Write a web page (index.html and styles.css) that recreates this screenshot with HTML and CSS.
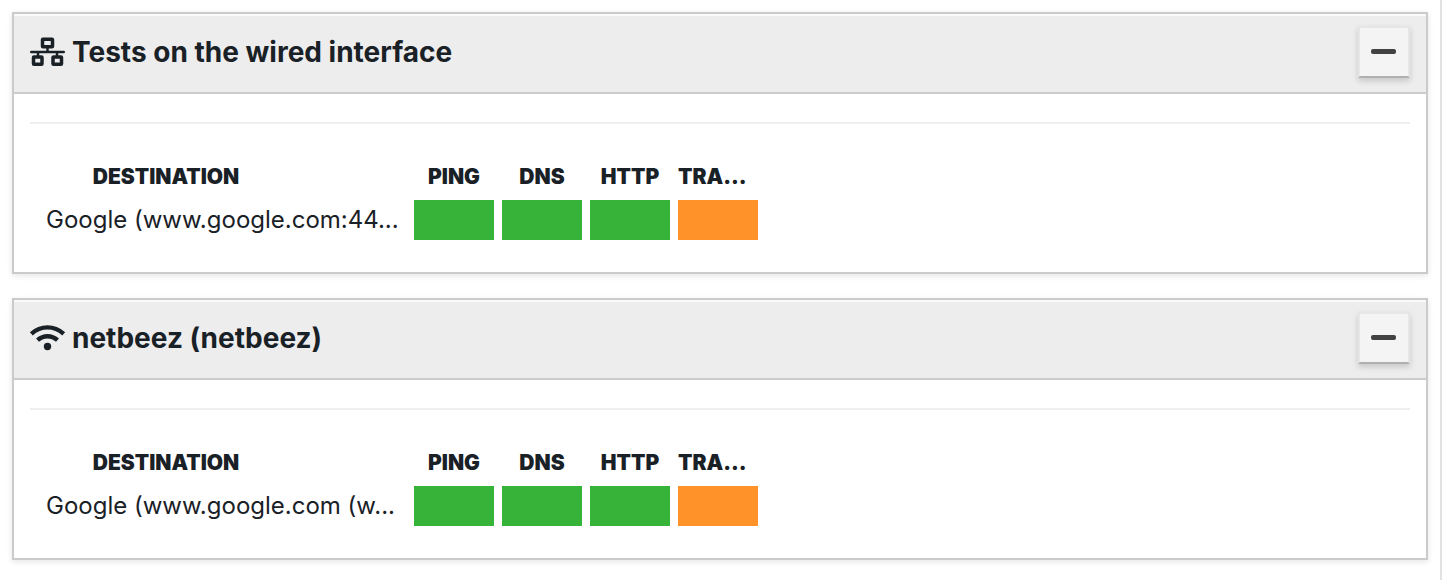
FILE: index.html
```html
<!DOCTYPE html>
<html lang="en">
<head>
<meta charset="utf-8">
<title>Agent tests</title>
<link rel="stylesheet" href="styles.css">
</head>
<body>
<main class="page">
  <section class="panel">
    <header class="panel-header">
      <h2 class="panel-title">
        <svg class="icon" viewBox="0 0 35 28" aria-hidden="true"><g fill="none" stroke="currentColor" stroke-width="3.500"><rect x="12.500" y="1.200" width="10" height="7.500" rx=".5"/><rect x="3.500" y="19" width="8.500" height="7.300" rx=".5"/><rect x="23" y="19" width="8.500" height="7.300" rx=".5"/></g><path d="M1.250 14h32.500M17.500 9v5M8 14v5M27 14v5" fill="none" stroke="currentColor" stroke-width="2.500" stroke-linecap="round"/></svg>
        Tests on the wired interface
      </h2>
      <button class="toggle" type="button" aria-label="Collapse"><span class="minus"></span></button>
    </header>
    <div class="panel-body">
      <table class="tests">
        <thead><tr><th class="name">DESTINATION</th><th>PING</th><th>DNS</th><th>HTTP</th><th class="cut">TRA...</th></tr></thead>
        <tbody><tr><td class="name">Google (www.google.com:44...</td><td class="ok"></td><td class="ok"></td><td class="ok"></td><td class="warn"></td></tr></tbody>
      </table>
    </div>
  </section>
  <section class="panel">
    <header class="panel-header">
      <h2 class="panel-title">
        <svg class="icon" viewBox="0 0 35 28" aria-hidden="true"><g fill="none" stroke="currentColor" stroke-width="4.400"><path d="M1.300 9.800Q8.500 3.400 17.500 3.400T33.700 9.800"/><path d="M7.500 16.200Q12 12.200 17.500 12.200T27.500 16.200"/></g><circle cx="17.500" cy="22.500" r="3.700" fill="currentColor"/></svg>
        netbeez (netbeez)
      </h2>
      <button class="toggle" type="button" aria-label="Collapse"><span class="minus"></span></button>
    </header>
    <div class="panel-body">
      <table class="tests">
        <thead><tr><th class="name">DESTINATION</th><th>PING</th><th>DNS</th><th>HTTP</th><th class="cut">TRA...</th></tr></thead>
        <tbody><tr><td class="name">Google (www.google.com (w...</td><td class="ok"></td><td class="ok"></td><td class="ok"></td><td class="warn"></td></tr></tbody>
      </table>
    </div>
  </section>
</main>
</body>
</html>
```
FILE: styles.css
```css
* { box-sizing: border-box; }

body {
  margin: 0;
  background: #fff;
  color: #192127;
  font-family: Inter, "Liberation Sans", sans-serif;
}

.page {
  display: flex;
  flex-direction: column;
  gap: 24px;
  min-height: 100vh;
  padding: 12px 12px 20px;
  border-right: 2px solid #e2e2e2;
}

.panel {
  border: 2px solid #cbcbcb;
  background: #fff;
  box-shadow: 0 2px 6px rgba(0, 0, 0, 0.1);
}

.panel-header {
  display: flex;
  align-items: flex-start;
  justify-content: space-between;
  padding: 10px 16px 14px;
  border-top: 2px solid #fafafa;
  border-bottom: 2px solid #cbcbcb;
  background: #ededed;
}

.panel-title {
  display: flex;
  align-items: center;
  gap: 7px;
  margin: 0;
  font-size: 28px;
  font-weight: 700;
  line-height: 52px;
}

.icon {
  width: 35px;
  height: 28px;
  overflow: visible;
}

.toggle {
  display: flex;
  align-items: center;
  justify-content: center;
  width: 52px;
  height: 52px;
  padding: 0 2px 2px 0;
  border: 2px solid #e6e6e6;
  border-bottom-color: #b0b0b0;
  background: #f4f4f4;
  box-shadow: 0 3px 6px rgba(0, 0, 0, 0.16);
}

.minus {
  width: 25px;
  height: 5px;
  border-radius: 2px;
  background: #424242;
}

.panel-body {
  margin: 28px 16px 0;
  padding: 36px 8px 32px;
  border-top: 2px solid #efefef;
}

.tests {
  table-layout: fixed;
  width: 728px;
  border-spacing: 8px 0;
}

.tests th,
.tests td {
  width: 80px;
  padding: 0;
  white-space: nowrap;
}

.tests th {
  height: 40px;
  padding-bottom: 6px;
  font-size: 21px;
  font-weight: 900;
  line-height: 34px;
}

.tests td {
  height: 40px;
  font-size: 24px;
  line-height: 40px;
}

.tests .name { width: 360px; }

.tests th.name {
  padding-right: 120px;
}

.tests th.cut { text-align: left; }

.ok { background: #38b339; }

.warn { background: #ff9229; }
```
